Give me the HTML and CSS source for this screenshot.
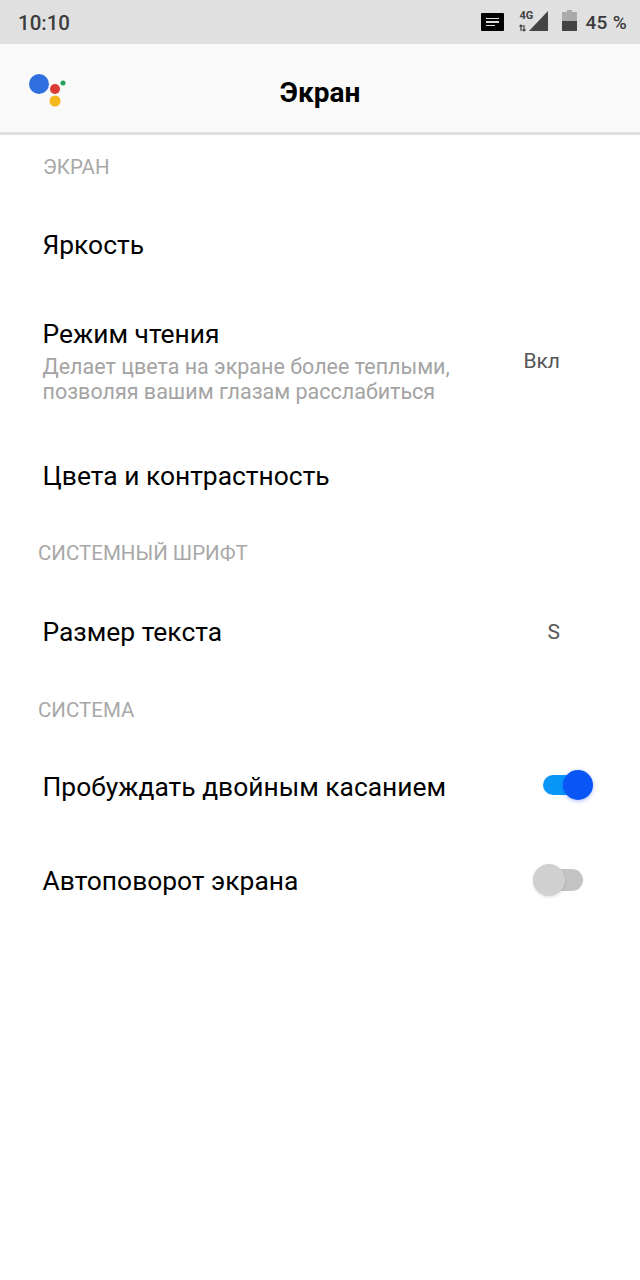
FILE: index.html
```html
<!DOCTYPE html>
<html lang="ru">
  <head>
    <meta charset="UTF-8" />
    <title>Экран</title>
    <link rel="stylesheet" href="styles.css">
  </head>
  <body>
    <!-- Статус-бар -->
    <div class="status-bar">
      <span class="clock">10:10</span>
      <div class="status-icons">
        <span class="notify-icon"><i></i><i></i><i class="short"></i></span>
        <svg class="signal-icon" width="32" height="24" viewBox="0 0 32 24">
          <path d="M30 1V21H11Z" fill="#444"/>
          <path d="M3 15v6M1.500 16.500L3 15l1.500 1.500M6 15v6M4.500 19.500L6 21l1.500-1.500" stroke="#444" stroke-width="1.200" fill="none"/>
        </svg>
        <span class="net-label">4G</span>
        <svg class="battery-icon" width="15" height="21" viewBox="0 0 15 21">
          <path d="M5 0h5v2h5v19H0V2h5Z" fill="#aaa"/>
          <rect y="11" width="15" height="10" fill="#444"/>
        </svg>
        <span class="battery-text">45 %</span>
      </div>
    </div>

    <!-- Шапка -->
    <div class="app-bar">
      <svg class="assistant-logo" width="40" height="40" viewBox="0 0 40 40">
        <circle cx="10" cy="14" r="10" fill="#2f6fde"/>
        <circle cx="26" cy="19" r="5" fill="#dc3a35"/>
        <circle cx="34" cy="13" r="2.500" fill="#21a35b"/>
        <circle cx="26" cy="31" r="5.500" fill="#f4b71c"/>
      </svg>
      <h1 class="app-title">Экран</h1>
    </div>

    <div class="settings">
      <p class="section-title">ЭКРАН</p>
      <div class="row row-brightness"><span class="row-name">Яркость</span></div>

      <div class="row row-reading">
        <div class="row-text">
          <span class="row-name">Режим чтения</span>
          <p class="row-desc">Делает цвета на экране более теплыми,<br>позволяя вашим глазам расслабиться</p>
        </div>
        <span class="row-value">Вкл</span>
      </div>

      <div class="row row-colors"><span class="row-name">Цвета и контрастность</span></div>

      <p class="section-title shifted">СИСТЕМНЫЙ ШРИФТ</p>
      <div class="row row-size">
        <span class="row-name">Размер текста</span>
        <span class="row-value">S</span>
      </div>

      <p class="section-title shifted section-system">СИСТЕМА</p>
      <div class="row row-switch">
        <span class="row-name">Пробуждать двойным касанием</span>
        <span class="switch on"></span>
      </div>
      <div class="row row-switch">
        <span class="row-name">Автоповорот экрана</span>
        <span class="switch off"></span>
      </div>
    </div>
  </body>
</html>
```

FILE: styles.css
```css
body {
  margin: 0;
  width: 640px;
  height: 1280px;
  overflow: hidden;
  background-color: #fff;
  color: #000;
  font-family: Roboto, "Noto Sans", sans-serif;
}

.status-bar {
  display: flex;
  justify-content: space-between;
  align-items: center;
  height: 44px;
  padding: 0 13px 0 18px;
  box-sizing: border-box;
  background-color: #e0e0e0;
  color: #3c3c3c;
}

.clock {
  font-size: 20.500px;
  font-weight: 500;
  padding-top: 1px;
}

.status-icons {
  display: flex;
  align-items: center;
  position: relative;
}

.notify-icon {
  display: flex;
  flex-direction: column;
  gap: 2px;
  justify-content: center;
  width: 23px;
  height: 18px;
  padding-left: 5px;
  box-sizing: border-box;
  background-color: #000;
  border-radius: 1px;
  margin-right: 14px;
}

.notify-icon i {
  display: block;
  width: 13px;
  height: 1.500px;
  background-color: #ddd;
}

.notify-icon i.short {
  width: 9px;
}

.signal-icon {
  margin-right: 12px;
}

.net-label {
  position: absolute;
  left: 38px;
  top: 0;
  font-size: 11px;
  line-height: 11px;
  font-weight: 700;
  color: #444;
}

.battery-icon {
  margin-bottom: 3px;
}

.battery-text {
  font-size: 19px;
  font-weight: 500;
  margin-left: 8px;
  letter-spacing: 0.3px;
}

.app-bar {
  display: flex;
  align-items: center;
  justify-content: center;
  position: relative;
  height: 80px;
  padding-top: 8px;
  background-color: #fafafa;
  border-bottom: 3px solid #e0e0e0;
}

.assistant-logo {
  position: absolute;
  left: 29px;
  top: 26px;
}

.app-title {
  margin: 0;
  font-size: 28px;
  font-weight: 700;
}

.settings {
  display: flex;
  flex-direction: column;
}

.section-title {
  margin: 20px 0;
  padding-left: 43px;
  font-size: 20.500px;
  line-height: 24px;
  color: #a8a8a8;
}

.section-title.shifted {
  padding-left: 38px;
}

.section-title.section-system {
  margin: 19px 0 18px;
}

.row {
  display: flex;
  align-items: center;
  justify-content: space-between;
  padding: 0 57px 0 42.500px;
}

.row-name {
  font-size: 26.400px;
  line-height: 32px;
}

.row-brightness {
  height: 92px;
}

.row-reading {
  height: 140px;
  padding-right: 80px;
}

.row-colors {
  height: 90px;
}

.row-size {
  height: 94px;
  padding-right: 80px;
}

.row-switch {
  height: 94px;
}

.row-desc {
  margin: 4px 0 0;
  font-size: 21.500px;
  line-height: 25px;
  color: #a4a4a4;
}

.row-value {
  font-size: 21px;
  color: #555;
}

.switch {
  position: relative;
  display: block;
  width: 40px;
  height: 20px;
  border-radius: 11px;
}

.switch::after {
  content: "";
  position: absolute;
  border-radius: 50%;
}

.switch.on {
  background-color: #0a96f7;
  margin-bottom: 4px;
}

.switch.on::after {
  top: -5px;
  right: -10px;
  width: 30px;
  height: 30px;
  background-color: #0a55f5;
  box-shadow: 0 1px 4px rgba(10, 60, 240, 0.35);
}

.switch.off {
  height: 22px;
  background-color: #c4c4c4;
  margin-bottom: 2px;
}

.switch.off::after {
  top: -5px;
  left: -10px;
  width: 32px;
  height: 32px;
  background-color: #d0d0d0;
  box-shadow: 0 1px 3px rgba(0, 0, 0, 0.15);
}
```
